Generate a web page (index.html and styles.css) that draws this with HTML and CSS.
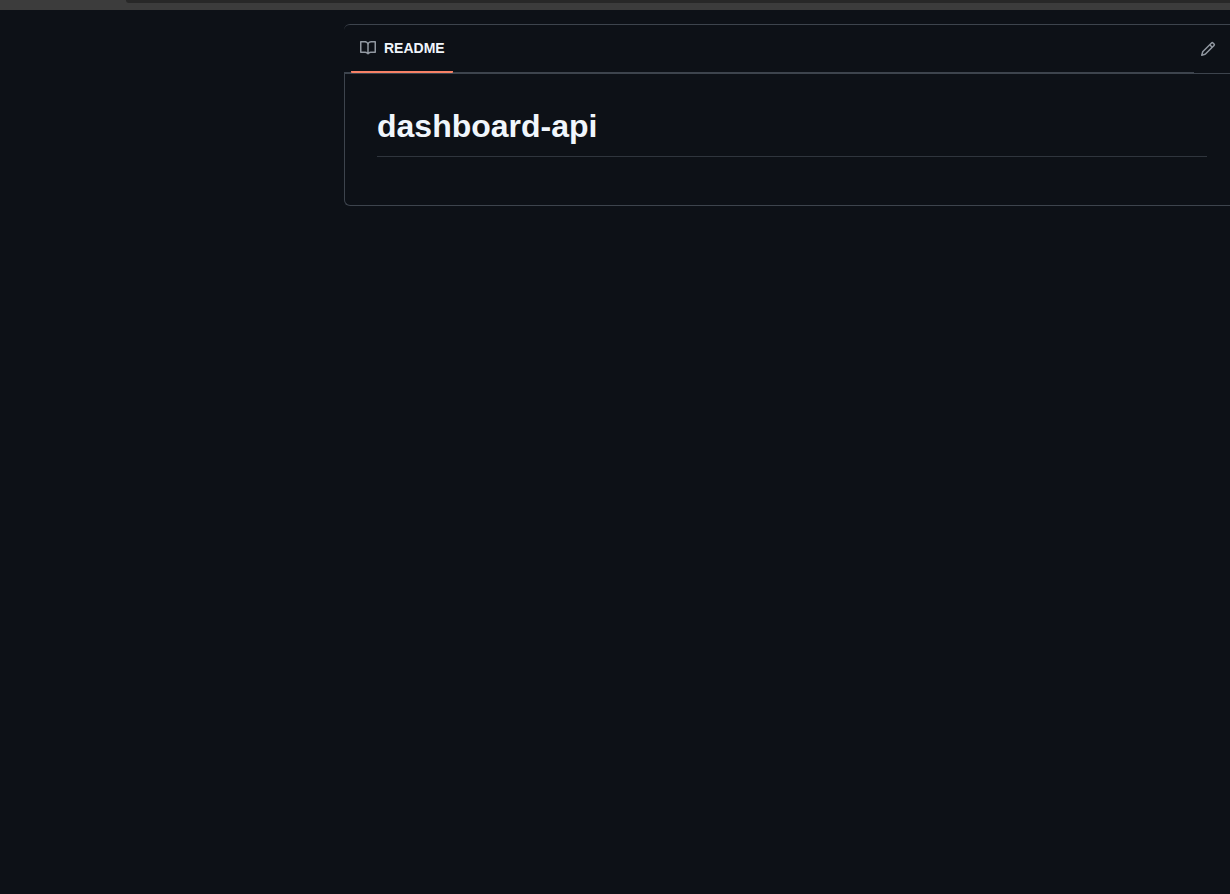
FILE: index.html
```html
<!DOCTYPE html>
<html lang="en">
<head>
<meta charset="utf-8">
<meta name="viewport" content="width=device-width, initial-scale=1">
<title>dashboard-api</title>
<link rel="stylesheet" href="styles.css">
</head>
<body>
<div class="browser-bar"><div class="address-field"></div></div>
<main class="page">
  <section class="readme">
    <header class="readme-header">
      <nav class="tabs" aria-label="Repository files">
        <a class="tab" href="#readme" aria-current="page">
          <svg class="icon" viewBox="0 0 16 16" aria-hidden="true"><path d="M0 1.75A.75.75 0 0 1 .75 1h4.253c1.227 0 2.317.59 3 1.501A3.743 3.743 0 0 1 11.006 1h4.245a.75.75 0 0 1 .75.75v10.5a.75.75 0 0 1-.75.75h-4.507a2.25 2.25 0 0 0-1.591.659l-.622.621a.75.75 0 0 1-1.06 0l-.622-.621A2.25 2.25 0 0 0 5.258 13H.75a.75.75 0 0 1-.75-.75Zm7.251 10.324.004-5.073-.002-2.253A2.25 2.25 0 0 0 5.003 2.5H1.5v9h3.757a3.75 3.75 0 0 1 1.994.574ZM8.755 4.75l-.004 7.322a3.752 3.752 0 0 1 1.992-.572H14.5v-9h-3.495a2.25 2.25 0 0 0-2.25 2.25Z"/></svg>
          <span>README</span>
        </a>
      </nav>
      <button class="edit" type="button" aria-label="Edit README">
        <svg class="icon" viewBox="0 0 16 16" aria-hidden="true"><path d="M11.013 1.427a1.75 1.75 0 0 1 2.474 0l1.086 1.086a1.75 1.75 0 0 1 0 2.474l-8.61 8.61c-.21.21-.47.364-.756.445l-3.251.93a.75.75 0 0 1-.927-.928l.929-3.25c.081-.286.235-.547.445-.758l8.61-8.61Zm.176 4.823L9.75 4.81l-6.286 6.287a.253.253 0 0 0-.064.108l-.558 1.953 1.953-.558a.253.253 0 0 0 .108-.064Zm1.238-3.763a.25.25 0 0 0-.354 0L10.811 3.75l1.439 1.44 1.263-1.263a.25.25 0 0 0 0-.354Z"/></svg>
      </button>
    </header>
    <article class="readme-body" id="readme">
      <h1 class="title">dashboard-api</h1>
    </article>
  </section>
</main>
</body>
</html>
```
FILE: styles.css
```css
* { box-sizing: border-box; }

body {
  margin: 0;
  min-height: 100vh;
  background: #0d1117;
  color: #f0f6fc;
  font-family: "Liberation Sans", Arial, sans-serif;
}

.browser-bar {
  height: 10px;
  padding-left: 126px;
  background: #3c3c3c;
}

.address-field {
  height: 3px;
  background: #282828;
  border-bottom-left-radius: 6px;
}

.page { padding: 14px 0 0 344px; }

.readme-header {
  display: flex;
  height: 49px;
  border-top: 1px solid #3d444d;
  border-top-left-radius: 6px;
}

.tabs {
  display: flex;
  flex: 1;
  padding-left: 7px;
  box-shadow: inset 0 -1px #3d444d;
}

.tab {
  display: flex;
  align-items: center;
  gap: 8px;
  padding: 0 8px 0 9px;
  border-bottom: 2px solid #f78166;
  border-radius: 1px;
  color: inherit;
  font-size: 14px;
  font-weight: 700;
  line-height: 20px;
  text-decoration: none;
}

.icon {
  display: block;
  width: 16px;
  height: 16px;
  fill: #9198a1;
}

.edit {
  width: 36px;
  padding: 0 14px 0 6px;
  border: 0;
  background: none;
}

.readme-body {
  padding: 32px 23px 32px 32px;
  border: 1px solid #3d444d;
  border-right: 0;
  border-bottom-left-radius: 6px;
}

.title {
  margin: 0 0 16px;
  padding-bottom: 10px;
  border-bottom: 1px solid #2f353d;
  font-size: 32px;
  line-height: 40px;
}
```
